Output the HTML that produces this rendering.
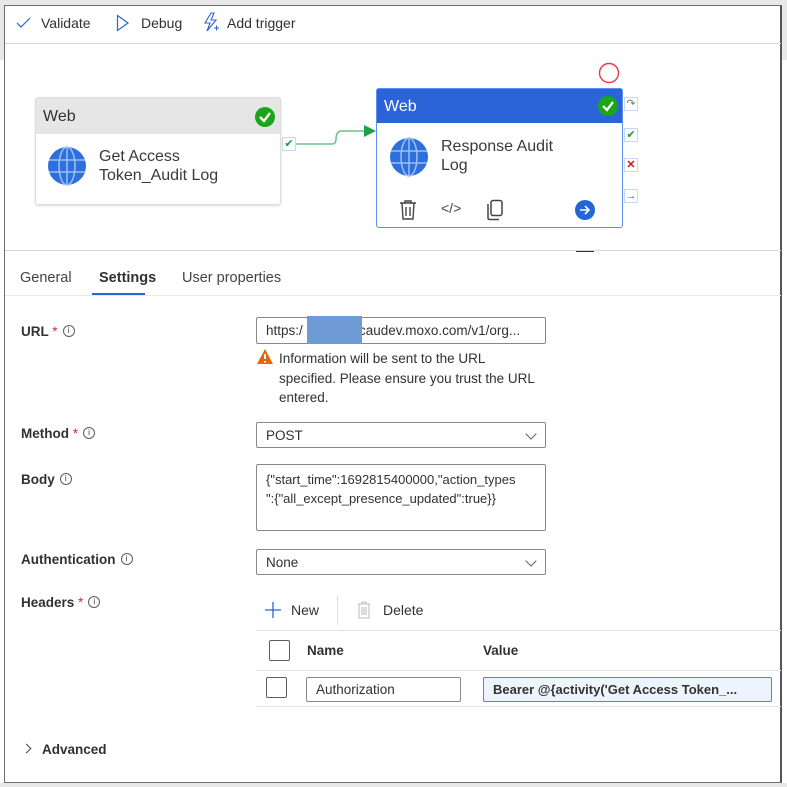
<!DOCTYPE html>
<html><head><style>
body{margin:0;width:787px;height:787px;position:relative;overflow:hidden;background:#fff;font-family:"Liberation Sans",sans-serif;color:#323130;font-size:14px}
.a{position:absolute}
.inp{position:absolute;border:1px solid #8a8886;border-radius:2px;background:#fff;box-sizing:border-box;padding-left:9px;font-size:13.5px;color:#323130}
.lbl{position:absolute;left:21px;font-size:13.5px;font-weight:bold;color:#323130}
.req{color:#c4314b;font-weight:normal}
.info{display:inline-block;width:10px;height:10px;border:1px solid #605e5c;border-radius:50%;font-size:8px;line-height:10px;text-align:center;font-weight:normal;vertical-align:top;margin-left:5px;margin-top:1px;font-style:normal}
.chev{position:absolute;right:10px;top:7px;width:7px;height:7px;border-right:1px solid #605e5c;border-bottom:1px solid #605e5c;transform:rotate(45deg)}
.node{position:absolute;background:#fff;border-radius:3px;box-sizing:border-box}
.port{position:absolute;width:14px;height:14px;border:1px solid #c7d7f5;background:#fff;box-sizing:border-box;font-size:11px;line-height:12px;text-align:center}
</style></head><body>
<div class="a" style="left:0;top:0;width:787px;height:5px;background:#e8e8e8"></div>
<div class="a" style="left:0;top:0;width:4px;height:60px;background:#e8e8e8"></div>
<div class="a" style="left:782px;top:0;width:5px;height:60px;background:#e8e8e8"></div>
<div class="a" style="left:0;top:783px;width:787px;height:4px;background:#e8e8e8"></div>
<div class="a" style="left:4px;top:5px;width:778px;height:778px;box-sizing:border-box;border:1px solid #6e6e6e;border-right:2px solid #555"></div>
<!-- toolbar -->
<div class="a" style="left:5px;top:43px;width:776px;height:1px;background:#d6d6d6"></div>
<svg class="a" style="left:16px;top:16px" width="16" height="14"><path d="M1 7 L5 11 L14 2" fill="none" stroke="#2b64d3" stroke-width="1.2"/></svg>
<div class="a" style="left:41px;top:15px;font-size:14px">Validate</div>
<svg class="a" style="left:116px;top:14px" width="14" height="18"><path d="M1.5 1.5 L12 9 L1.5 16.5Z" fill="none" stroke="#2b64d3" stroke-width="1.2"/></svg>
<div class="a" style="left:141px;top:15px;font-size:14px">Debug</div>
<svg class="a" style="left:202px;top:12px" width="18" height="20"><path d="M9 1 L3 11 H8 L5 19 L14 8 H9 L12 1Z" fill="none" stroke="#2b64d3" stroke-width="1.1"/><path d="M12 16 h5 M14.5 13.5 v5" stroke="#2b64d3" stroke-width="1.1"/></svg>
<div class="a" style="left:227px;top:15px;font-size:14px">Add trigger</div>
<!-- canvas nodes -->
<div class="node" style="left:35px;top:97px;width:246px;height:108px;border:1px solid #ddd;box-shadow:0 1px 2px rgba(0,0,0,.15)">
 <div style="height:36px;background:#e6e6e6;font-size:16px;line-height:38px;padding-left:7px">Web</div>
</div>
<svg class="a" style="left:254px;top:106px" width="22" height="22"><circle cx="11" cy="11" r="10" fill="#1aa51a"/><path d="M6 11 L10 15 L16 7" fill="none" stroke="#fff" stroke-width="2.3"/></svg>
<svg class="a" style="left:47px;top:146px" width="40" height="40"><circle cx="20" cy="20" r="19" fill="#2f6fdc"/><g fill="none" stroke="#9cc0f5" stroke-width="1.5"><ellipse cx="20" cy="20" rx="8" ry="19"/><path d="M20 1 V39 M2 14 H38 M2 26 H38"/></g></svg>
<div class="a" style="left:99px;top:147px;font-size:16px;line-height:19px;color:#3a3a3a">Get Access<br>Token_Audit Log</div>
<div class="port" style="left:282px;top:137px;color:#1a9a3a">✔</div>
<svg class="a" style="left:296px;top:124px" width="82" height="24"><path d="M0 20 H36 Q40 20 40 15 Q40 7 46 7 H70" fill="none" stroke="#6cc28a" stroke-width="1.5"/><path d="M68 1 L80 7 L68 13Z" fill="#1fa04a"/></svg>
<div class="node" style="left:376px;top:88px;width:247px;height:140px;border:1px solid #5b8ef0">
 <div style="height:34px;background:#2b63d9;color:#fff;font-size:16px;line-height:36px;padding-left:7px">Web</div>
</div>
<svg class="a" style="left:597px;top:95px" width="22" height="22"><circle cx="11" cy="11" r="10" fill="#1aa51a"/><path d="M6 11 L10 15 L16 7" fill="none" stroke="#fff" stroke-width="2.3"/></svg>
<svg class="a" style="left:598px;top:62px" width="22" height="22"><circle cx="11" cy="11" r="9.5" fill="none" stroke="#f0364a" stroke-width="1.4"/></svg>
<svg class="a" style="left:389px;top:137px" width="40" height="40"><circle cx="20" cy="20" r="19" fill="#2f6fdc"/><g fill="none" stroke="#9cc0f5" stroke-width="1.5"><ellipse cx="20" cy="20" rx="8" ry="19"/><path d="M20 1 V39 M2 14 H38 M2 26 H38"/></g></svg>
<div class="a" style="left:441px;top:137px;font-size:16px;line-height:19px;color:#3a3a3a">Response Audit<br>Log</div>
<svg class="a" style="left:398px;top:199px" width="20" height="22"><path d="M2 4 H18 M7 4 V2 H13 V4 M4 4 L5 20 H15 L16 4 M8 8 V17 M12 8 V17" fill="none" stroke="#444" stroke-width="1.4"/></svg>
<div class="a" style="left:441px;top:200px;font-size:14px;color:#444">&lt;/&gt;</div>
<svg class="a" style="left:485px;top:199px" width="20" height="22"><rect x="6" y="1.5" width="11" height="15" rx="2" fill="none" stroke="#444" stroke-width="1.5"/><path d="M3 5 V19 Q3 20.5 5 20.5 H14" fill="none" stroke="#444" stroke-width="1.5"/></svg>
<svg class="a" style="left:575px;top:200px" width="20" height="20"><circle cx="10" cy="10" r="10" fill="#2566d6"/><path d="M5 10 H14 M10 6 L14 10 L10 14" fill="none" stroke="#fff" stroke-width="1.6"/></svg>
<div class="port" style="left:624px;top:97px;color:#777">↷</div>
<div class="port" style="left:624px;top:128px;color:#1a9a3a">✔</div>
<div class="port" style="left:624px;top:158px;color:#c41a1a;font-weight:bold">✕</div>
<div class="port" style="left:624px;top:189px;color:#2566d6">→</div>
<div class="a" style="left:576px;top:250px;width:18px;height:2px;background:#333"></div>
<!-- bottom panel -->
<div class="a" style="left:5px;top:250px;width:776px;height:1px;background:#d6d6d6"></div>
<div class="a" style="left:20px;top:270px;font-size:14.5px;color:#444">General</div>
<div class="a" style="left:99px;top:270px;font-size:14.5px;font-weight:bold">Settings</div>
<div class="a" style="left:92px;top:293px;width:53px;height:2px;background:#2b63d9"></div>
<div class="a" style="left:182px;top:270px;font-size:14.5px;color:#444">User properties</div>
<div class="a" style="left:5px;top:295px;width:776px;height:1px;background:#e8e8e8"></div>

<div class="lbl" style="top:324px">URL <span class="req">*</span><i class="info">i</i></div>
<div class="inp" style="left:256px;top:317px;width:290px;height:27px;line-height:26px">https:/&nbsp;&nbsp;&nbsp;&nbsp;&nbsp;&nbsp;&nbsp;&nbsp;&nbsp;&nbsp;&nbsp;&nbsp;&nbsp;&nbsp;&nbsp;caudev.moxo.com/v1/org...</div>
<div class="a" style="left:307px;top:316px;width:55px;height:28px;background:#6e9bd3"></div>
<svg class="a" style="left:256px;top:348px" width="18" height="17"><path d="M9 1 L17 16 H1Z" fill="#e8650f"/><path d="M9 6 V11 M9 13 V14.5" stroke="#fff" stroke-width="2"/></svg>
<div class="a" style="left:279px;top:349px;font-size:13.5px;line-height:19.5px">Information will be sent to the URL<br>specified. Please ensure you trust the URL<br>entered.</div>

<div class="lbl" style="top:426px">Method <span class="req">*</span><i class="info">i</i></div>
<div class="inp" style="left:256px;top:422px;width:290px;height:26px;line-height:25px">POST<div class="chev"></div></div>
<div class="lbl" style="top:472px">Body<i class="info">i</i></div>
<div class="inp" style="left:256px;top:464px;width:290px;height:67px;line-height:19px;padding-top:5px;font-size:13px">{"start_time":1692815400000,"action_types<br>":{"all_except_presence_updated":true}}</div>
<div class="lbl" style="top:552px">Authentication<i class="info">i</i></div>
<div class="inp" style="left:256px;top:549px;width:290px;height:26px;line-height:25px">None<div class="chev"></div></div>
<div class="lbl" style="top:595px">Headers <span class="req">*</span><i class="info">i</i></div>

<svg class="a" style="left:264px;top:601px" width="18" height="18"><path d="M9 1 V17 M1 9 H17" stroke="#2b63d9" stroke-width="1.3"/></svg>
<div class="a" style="left:291px;top:602px;font-size:14px">New</div>
<div class="a" style="left:337px;top:595px;width:1px;height:30px;background:#ddd"></div>
<svg class="a" style="left:356px;top:600px" width="16" height="20"><path d="M2 4 H14 M6 4 V2 H10 V4 M3 4 V18 H13 V4 M6 7 V15 M8 7 V15 M10 7 V15" fill="none" stroke="#bbb" stroke-width="1"/></svg>
<div class="a" style="left:383px;top:602px;font-size:14px">Delete</div>
<div class="a" style="left:256px;top:630px;width:525px;height:1px;background:#e5e5e5"></div>
<div class="a" style="left:269px;top:640px;width:21px;height:21px;border:1px solid #605e5c;border-radius:2px;box-sizing:border-box"></div>
<div class="a" style="left:307px;top:643px;font-size:13.5px;font-weight:bold">Name</div>
<div class="a" style="left:483px;top:643px;font-size:13.5px;font-weight:bold">Value</div>
<div class="a" style="left:256px;top:670px;width:525px;height:1px;background:#e5e5e5"></div>
<div class="a" style="left:266px;top:677px;width:21px;height:21px;border:1px solid #605e5c;border-radius:2px;box-sizing:border-box"></div>
<div class="inp" style="left:306px;top:677px;width:155px;height:25px;line-height:24px">Authorization</div>
<div class="inp" style="left:483px;top:677px;width:289px;height:25px;line-height:24px;background:#eef4fd;border-color:#4a86e8;font-weight:bold;font-size:13px">Bearer @{activity('Get Access Token_...</div>
<div class="a" style="left:256px;top:706px;width:525px;height:1px;background:#e5e5e5"></div>

<div class="a" style="left:23px;top:745px;width:6px;height:6px;border-right:1.3px solid #444;border-bottom:1.3px solid #444;transform:rotate(-45deg)"></div>
<div class="a" style="left:42px;top:742px;font-size:13.5px;font-weight:bold">Advanced</div>
</body></html>
